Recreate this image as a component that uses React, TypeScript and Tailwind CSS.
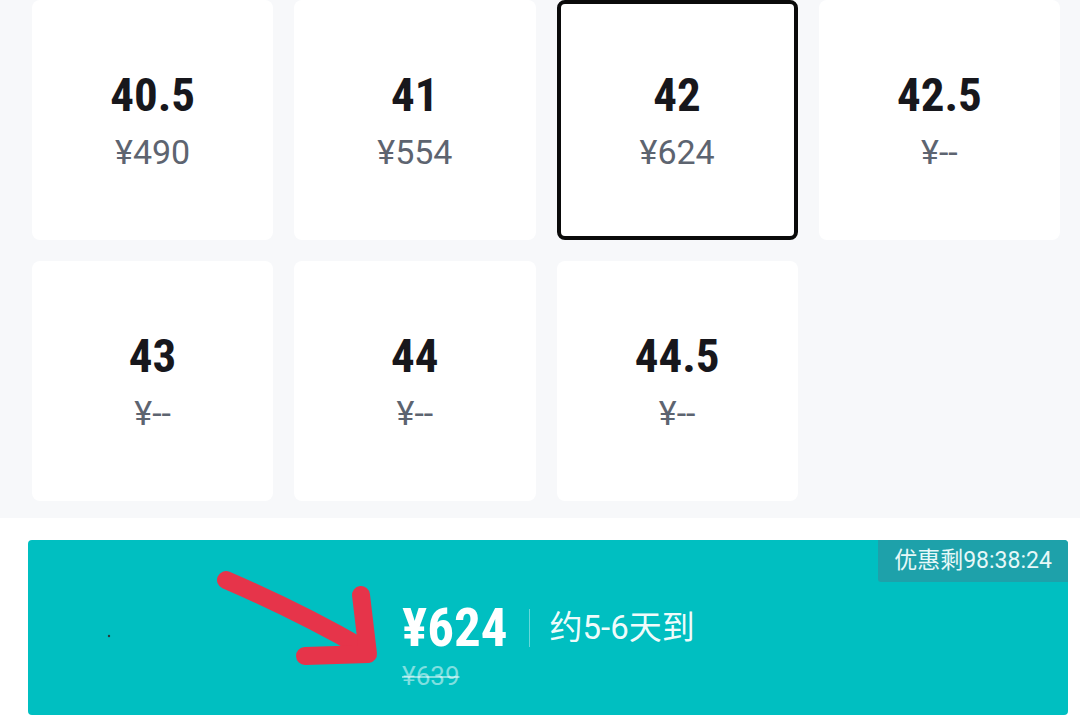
import React from "react";

type Size = { size: string; price: string; selected?: boolean };

const sizes: Size[] = [
  { size: "40.5", price: "¥490" },
  { size: "41", price: "¥554" },
  { size: "42", price: "¥624", selected: true },
  { size: "42.5", price: "¥--" },
  { size: "43", price: "¥--" },
  { size: "44", price: "¥--" },
  { size: "44.5", price: "¥--" },
];

const narrow = { fontFamily: '"Liberation Sans Narrow", "Roboto Condensed", "Arial Narrow", sans-serif' };

function Card({ item }: { item: Size }) {
  return (
    <div
      className={
        "flex flex-col items-center justify-center bg-white rounded-[8px] pt-[3px] " +
        (item.selected ? "border-4 border-[#0a0a0a]" : "")
      }
    >
      <div className="text-[47px] leading-[48px] font-bold text-[#17171c]" style={narrow}>
        {item.size}
      </div>
      <div
        className="mt-[13px] text-[34px] leading-[40px] text-[#5d6470]"
        style={{ fontFamily: 'Roboto, "Noto Sans", sans-serif' }}
      >
        {item.price}
      </div>
    </div>
  );
}

export default function App() {
  return (
    <div className="relative w-[1080px] h-[726px] overflow-hidden bg-white">
      <div className="h-[518px] bg-[#f7f8fa] pl-[32px] pr-[20px] pb-[17px]">
        <div className="grid grid-cols-4 grid-rows-[240px_240px] gap-x-[21px] gap-y-[21px]">
          {sizes.map((s) => (
            <Card key={s.size} item={s} />
          ))}
        </div>
      </div>

      <div className="pt-[22px] pl-[28px]">
        <div className="relative w-[1040px] h-[175px] rounded-[4px] bg-[#00bfc1]">
          <div
            className="absolute top-0 right-0 w-[190px] h-[42px] rounded-tr-[4px] rounded-bl-[3px] bg-[#1ea1aa] flex items-center justify-center text-[23px] text-[#e6f8f8]"
            style={{ fontFamily: 'Roboto, "Noto Sans CJK SC", sans-serif' }}
          >
            优惠剩98:38:24
          </div>
          <div className="pl-[374px] pt-[62px] flex flex-col items-start">
            <div className="flex items-center">
              <div className="text-[53px] leading-[52px] font-bold text-white" style={narrow}>
                ¥624
              </div>
              <div className="ml-[21px] w-px h-[38px] bg-white/40" />
              <div
                className="ml-[20px] text-[33px] leading-[44px] text-white/95"
                style={{ fontFamily: 'Roboto, "Noto Sans CJK SC", sans-serif' }}
              >
                约5-6天到
              </div>
            </div>
            <div
              className="mt-[8px] text-[26px] leading-[28px] text-white/50 line-through"
              style={{ fontFamily: 'Roboto, "Noto Sans", sans-serif' }}
            >
              ¥639
            </div>
          </div>
        </div>
      </div>

      <svg
        className="absolute left-0 top-0 pointer-events-none"
        width="1080"
        height="726"
        viewBox="0 0 1080 726"
      >
        <circle cx="109" cy="636" r="1.2" fill="#2a3a3a" />
        <g stroke="#e6344a" strokeWidth="18" strokeLinecap="round" strokeLinejoin="round" fill="none">
          <path d="M226 580 Q 300 612 366 650" />
          <path d="M361 595 L368 654 L305 656" />
        </g>
      </svg>
    </div>
  );
}
